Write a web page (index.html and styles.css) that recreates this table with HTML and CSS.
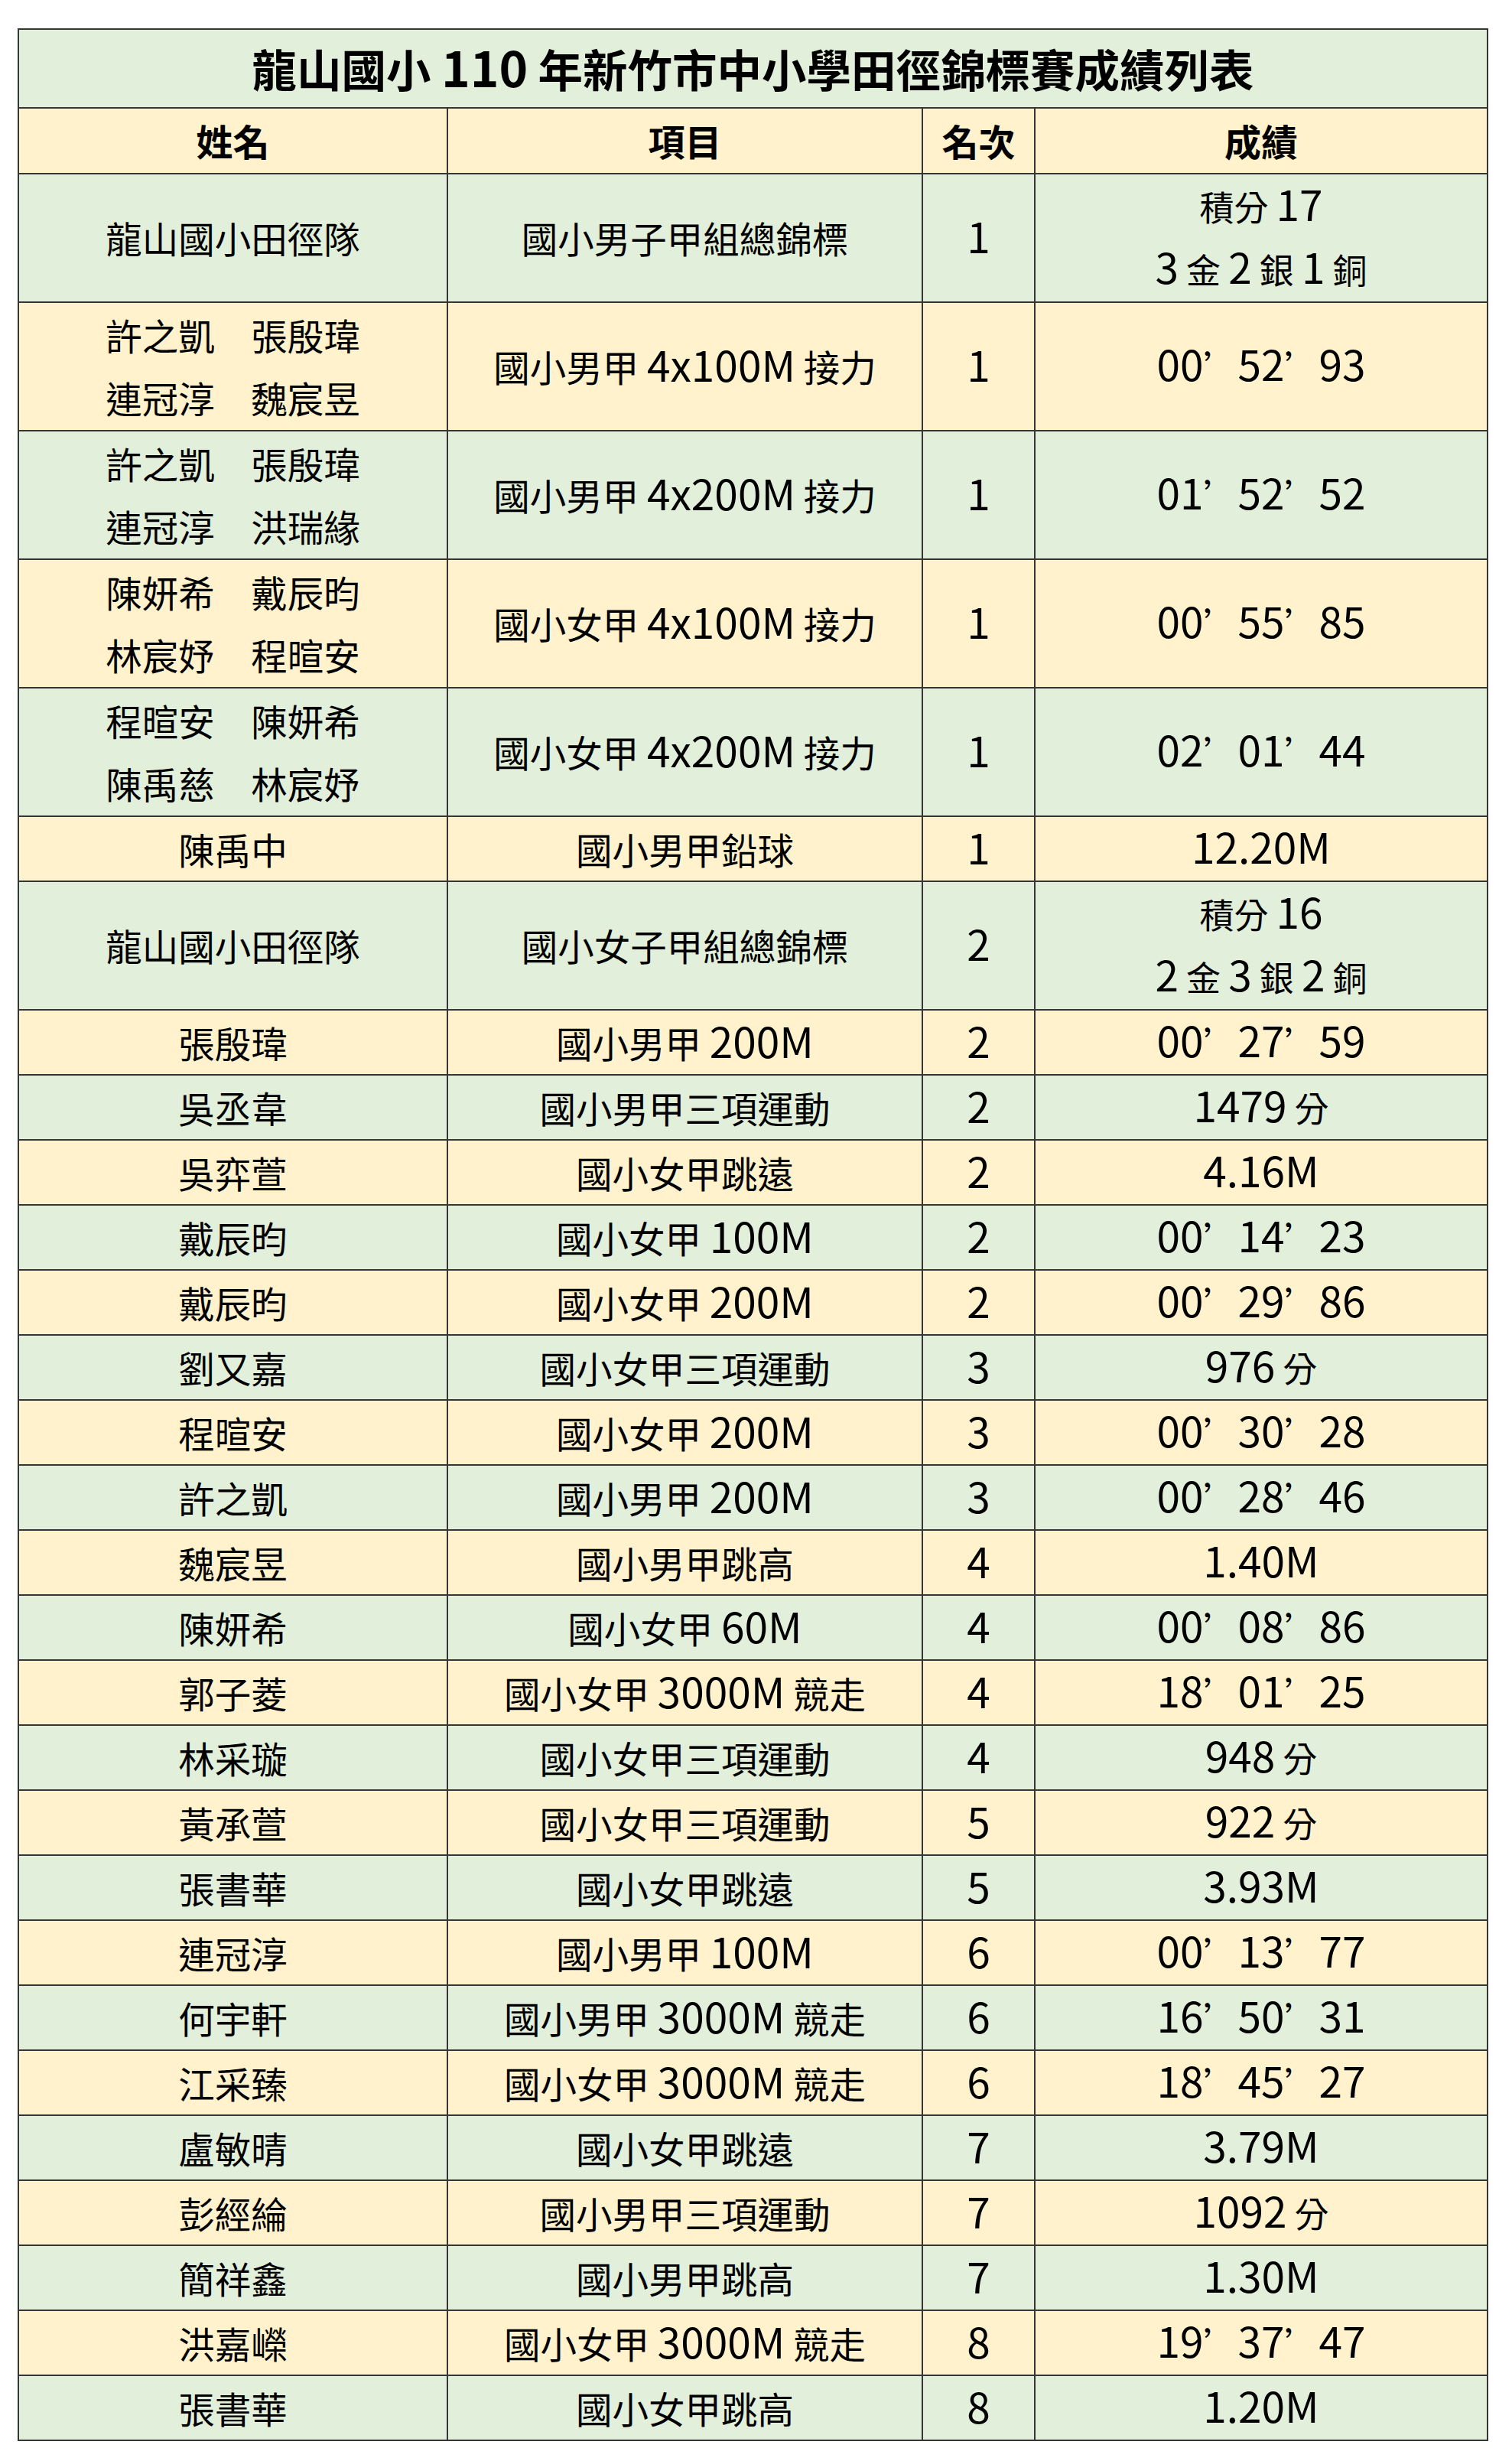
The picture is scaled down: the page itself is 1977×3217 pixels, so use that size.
FILE: index.html
```html
<!DOCTYPE html>
<html lang="zh-Hant">
<head>
<meta charset="utf-8">
<title>龍山國小 110 年新竹市中小學田徑錦標賽成績列表</title>
<link rel="stylesheet" href="styles.css">
</head>
<body>
<div class="page">
<table class="results">
<colgroup>
<col class="c-name"><col class="c-event"><col class="c-rank"><col class="c-score">
</colgroup>
<tr class="title g"><td colspan="4">龍山國小 <span class="n">110</span> 年新竹市中小學田徑錦標賽成績列表</td></tr>
<tr class="head y"><td>姓名</td><td>項目</td><td>名次</td><td>成績</td></tr>

<tr class="dbl g"><td>龍山國小田徑隊</td><td>國小男子甲組總錦標</td><td><span class="n">1</span></td><td class="sc">積分 <span class="n">17</span><br><span class="n">3</span> 金 <span class="n">2</span> 銀 <span class="n">1</span> 銅</td></tr>
<tr class="dbl y"><td>許之凱　張殷瑋<br>連冠淳　魏宸昱</td><td>國小男甲 <span class="n">4x100M</span> 接力</td><td><span class="n">1</span></td><td class="sc"><span class="n">00</span>’<span class="n">52</span>’<span class="n">93</span></td></tr>
<tr class="dbl g"><td>許之凱　張殷瑋<br>連冠淳　洪瑞緣</td><td>國小男甲 <span class="n">4x200M</span> 接力</td><td><span class="n">1</span></td><td class="sc"><span class="n">01</span>’<span class="n">52</span>’<span class="n">52</span></td></tr>
<tr class="dbl y"><td>陳妍希　戴辰昀<br>林宸妤　程暄安</td><td>國小女甲 <span class="n">4x100M</span> 接力</td><td><span class="n">1</span></td><td class="sc"><span class="n">00</span>’<span class="n">55</span>’<span class="n">85</span></td></tr>
<tr class="dbl g"><td>程暄安　陳妍希<br>陳禹慈　林宸妤</td><td>國小女甲 <span class="n">4x200M</span> 接力</td><td><span class="n">1</span></td><td class="sc"><span class="n">02</span>’<span class="n">01</span>’<span class="n">44</span></td></tr>
<tr class="one y"><td>陳禹中</td><td>國小男甲鉛球</td><td><span class="n">1</span></td><td class="sc"><span class="n">12.20M</span></td></tr>
<tr class="dbl g"><td>龍山國小田徑隊</td><td>國小女子甲組總錦標</td><td><span class="n">2</span></td><td class="sc">積分 <span class="n">16</span><br><span class="n">2</span> 金 <span class="n">3</span> 銀 <span class="n">2</span> 銅</td></tr>
<tr class="one y"><td>張殷瑋</td><td>國小男甲 <span class="n">200M</span></td><td><span class="n">2</span></td><td class="sc"><span class="n">00</span>’<span class="n">27</span>’<span class="n">59</span></td></tr>
<tr class="one g"><td>吳丞韋</td><td>國小男甲三項運動</td><td><span class="n">2</span></td><td class="sc"><span class="n">1479</span> 分</td></tr>
<tr class="one y"><td>吳弈萱</td><td>國小女甲跳遠</td><td><span class="n">2</span></td><td class="sc"><span class="n">4.16M</span></td></tr>
<tr class="one g"><td>戴辰昀</td><td>國小女甲 <span class="n">100M</span></td><td><span class="n">2</span></td><td class="sc"><span class="n">00</span>’<span class="n">14</span>’<span class="n">23</span></td></tr>
<tr class="one y"><td>戴辰昀</td><td>國小女甲 <span class="n">200M</span></td><td><span class="n">2</span></td><td class="sc"><span class="n">00</span>’<span class="n">29</span>’<span class="n">86</span></td></tr>
<tr class="one g"><td>劉又嘉</td><td>國小女甲三項運動</td><td><span class="n">3</span></td><td class="sc"><span class="n">976</span> 分</td></tr>
<tr class="one y"><td>程暄安</td><td>國小女甲 <span class="n">200M</span></td><td><span class="n">3</span></td><td class="sc"><span class="n">00</span>’<span class="n">30</span>’<span class="n">28</span></td></tr>
<tr class="one g"><td>許之凱</td><td>國小男甲 <span class="n">200M</span></td><td><span class="n">3</span></td><td class="sc"><span class="n">00</span>’<span class="n">28</span>’<span class="n">46</span></td></tr>
<tr class="one y"><td>魏宸昱</td><td>國小男甲跳高</td><td><span class="n">4</span></td><td class="sc"><span class="n">1.40M</span></td></tr>
<tr class="one g"><td>陳妍希</td><td>國小女甲 <span class="n">60M</span></td><td><span class="n">4</span></td><td class="sc"><span class="n">00</span>’<span class="n">08</span>’<span class="n">86</span></td></tr>
<tr class="one y"><td>郭子菱</td><td>國小女甲 <span class="n">3000M</span> 競走</td><td><span class="n">4</span></td><td class="sc"><span class="n">18</span>’<span class="n">01</span>’<span class="n">25</span></td></tr>
<tr class="one g"><td>林采璇</td><td>國小女甲三項運動</td><td><span class="n">4</span></td><td class="sc"><span class="n">948</span> 分</td></tr>
<tr class="one y"><td>黃承萱</td><td>國小女甲三項運動</td><td><span class="n">5</span></td><td class="sc"><span class="n">922</span> 分</td></tr>
<tr class="one g"><td>張書華</td><td>國小女甲跳遠</td><td><span class="n">5</span></td><td class="sc"><span class="n">3.93M</span></td></tr>
<tr class="one y"><td>連冠淳</td><td>國小男甲 <span class="n">100M</span></td><td><span class="n">6</span></td><td class="sc"><span class="n">00</span>’<span class="n">13</span>’<span class="n">77</span></td></tr>
<tr class="one g"><td>何宇軒</td><td>國小男甲 <span class="n">3000M</span> 競走</td><td><span class="n">6</span></td><td class="sc"><span class="n">16</span>’<span class="n">50</span>’<span class="n">31</span></td></tr>
<tr class="one y"><td>江采臻</td><td>國小女甲 <span class="n">3000M</span> 競走</td><td><span class="n">6</span></td><td class="sc"><span class="n">18</span>’<span class="n">45</span>’<span class="n">27</span></td></tr>
<tr class="one g"><td>盧敏晴</td><td>國小女甲跳遠</td><td><span class="n">7</span></td><td class="sc"><span class="n">3.79M</span></td></tr>
<tr class="one y"><td>彭經綸</td><td>國小男甲三項運動</td><td><span class="n">7</span></td><td class="sc"><span class="n">1092</span> 分</td></tr>
<tr class="one g"><td>簡祥鑫</td><td>國小男甲跳高</td><td><span class="n">7</span></td><td class="sc"><span class="n">1.30M</span></td></tr>
<tr class="one y"><td>洪嘉嶸</td><td>國小女甲 <span class="n">3000M</span> 競走</td><td><span class="n">8</span></td><td class="sc"><span class="n">19</span>’<span class="n">37</span>’<span class="n">47</span></td></tr>
<tr class="one g"><td>張書華</td><td>國小女甲跳高</td><td><span class="n">8</span></td><td class="sc"><span class="n">1.20M</span></td></tr>
</table>
</div>
</body>
</html>
```

FILE: styles.css
```css
html, body {
  margin: 0;
  padding: 0;
  background: #ffffff;
}

.page {
  padding: 37px 0 30px 23px;
}

.results {
  border-collapse: collapse;
  table-layout: fixed;
  width: 1921px;
  font-family: "Noto Sans CJK TC", "Noto Sans CJK JP", sans-serif;
  font-size: 47.5px;
  color: #000000;
}

.c-name { width: 561px; }
.c-event { width: 621px; }
.c-rank { width: 147px; }
.c-score { width: 592px; }

.results td {
  border: 2px solid #363636;
  text-align: center;
  vertical-align: middle;
  padding: 0;
  line-height: 82px;
  white-space: nowrap;
}

.g td { background: #e2efda; }
.y td { background: #fff2cc; }

.title td {
  height: 101px;
  font-size: 58.5px;
  font-weight: 700;
  line-height: 1.2;
}

.head td {
  height: 84px;
  font-size: 48px;
  font-weight: 700;
  line-height: 1.2;
}

.one td { height: 83px; }
.dbl td { height: 166px; }

.results td.sc { font-size: 45px; }

.n {
  font-size: 55px;
  line-height: 0;
}

.title .n { font-size: 64px; }
```
